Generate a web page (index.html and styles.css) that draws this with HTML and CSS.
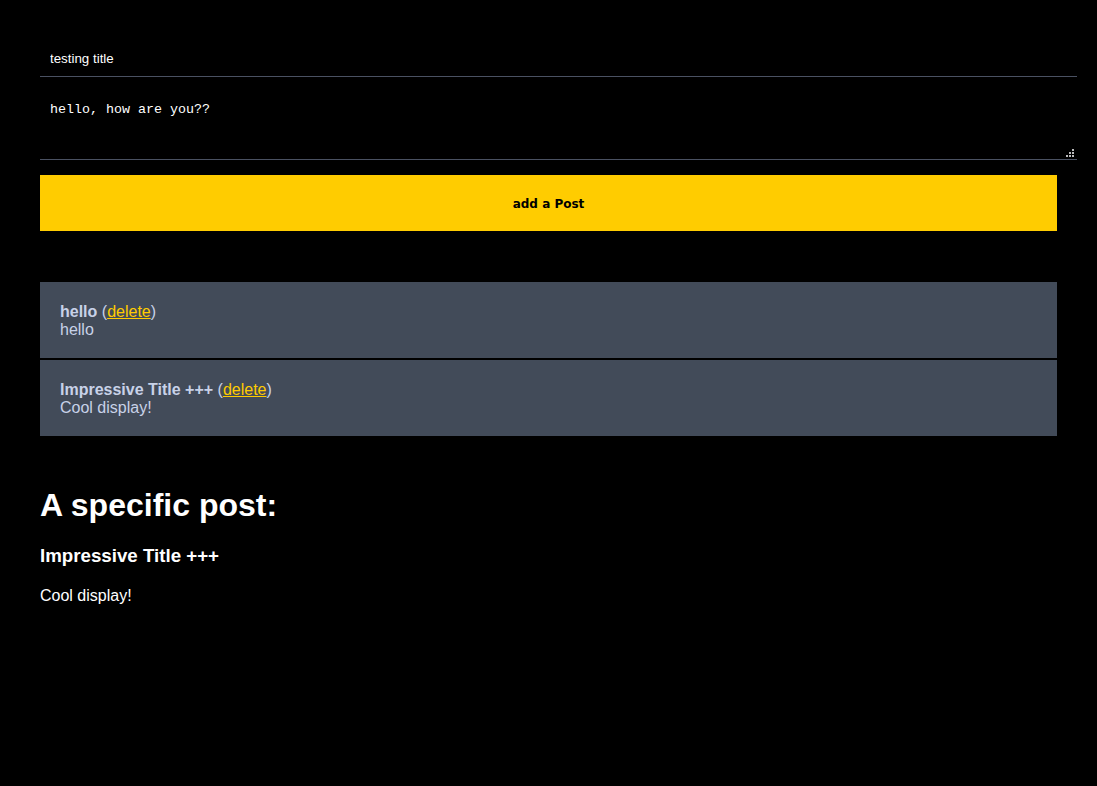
FILE: index.html
```html
<!DOCTYPE html>
<html>
<head>
<meta charset="utf-8">
<link rel="stylesheet" href="styles.css">
</head>
<body>
<main class="page">
  <form class="post-form">
    <input class="title-input" type="text" value="testing title">
    <textarea class="body-input">hello, how are you??</textarea>
    <button class="add-btn" type="button">add a Post</button>
  </form>
  <ul class="posts">
    <li class="post"><strong>hello</strong> (<a href="#">delete</a>)<br>hello</li>
    <li class="post"><strong>Impressive Title +++</strong> (<a href="#">delete</a>)<br>Cool display!</li>
  </ul>
  <h1 class="specific-heading">A specific post:</h1>
  <h3 class="specific-title">Impressive Title +++</h3>
  <p class="specific-body">Cool display!</p>
</main>
</body>
</html>
```

FILE: styles.css
```css
html, body {
  margin: 0;
  background: #000;
  color: #fff;
  font-family: "Liberation Sans", Arial, sans-serif;
}
.page {
  padding: 40px;
}
.post-form {
  display: flex;
  flex-direction: column;
  margin: 0;
}
.title-input {
  box-sizing: border-box;
  width: calc(100% + 20px);
  height: 37px;
  margin: 0;
  padding: 10px 10px;
  background: #000;
  color: #fff;
  border: none;
  border-bottom: 1px solid #4a5162;
  font-family: "Liberation Sans", Arial, sans-serif;
  font-size: 13.33px;
  outline: none;
}
.body-input {
  box-sizing: border-box;
  width: calc(100% + 20px);
  height: 83px;
  margin: 0;
  padding: 25px 10px 9px;
  background: #000;
  color: #fff;
  border: none;
  border-bottom: 1px solid #4a5162;
  font-family: "Liberation Mono", "Courier New", monospace;
  font-size: 13.33px;
  outline: none;
}
.body-input::-webkit-resizer {
  background:
    linear-gradient(#bbb, #bbb) 10px 5px / 2px 2px no-repeat,
    linear-gradient(#bbb, #bbb) 7px 8px / 2px 2px no-repeat,
    linear-gradient(#bbb, #bbb) 10px 8px / 2px 2px no-repeat,
    linear-gradient(#bbb, #bbb) 4px 11px / 2px 2px no-repeat,
    linear-gradient(#bbb, #bbb) 7px 11px / 2px 2px no-repeat,
    linear-gradient(#bbb, #bbb) 10px 11px / 2px 2px no-repeat,
    #000;
}
.add-btn {
  margin-top: 15px;
  width: 100%;
  height: 56px;
  padding: 2px 0 0;
  background: #ffcc00;
  color: #000;
  border: none;
  font-family: "DejaVu Sans", Verdana, sans-serif;
  font-weight: bold;
  font-size: 12px;
}
.posts {
  list-style: none;
  margin: 51px 0 0;
  padding: 0;
  display: flex;
  flex-direction: column;
  gap: 2px;
}
.post {
  background: #424b59;
  color: #c8d2e8;
  padding: 21px 20px 19px;
  font-size: 16px;
  line-height: 18px;
}
.post a {
  color: #ffcc00;
}
.specific-heading {
  font-size: 32px;
  margin: 51px 0 21px;
  line-height: 37px;
}
.specific-title {
  font-size: 18.72px;
  margin: 0;
  line-height: 22px;
}
.specific-body {
  font-size: 16px;
  margin: 20px 0 0;
  line-height: 18px;
}
```
